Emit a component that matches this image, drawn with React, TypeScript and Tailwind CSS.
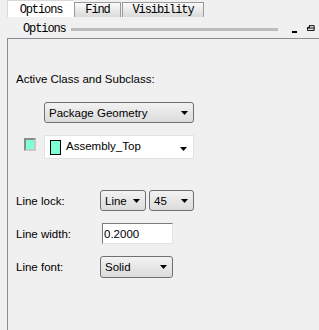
import React from "react";

function Caret() {
  return (
    <svg width="7" height="4" viewBox="0 0 7 4" className="shrink-0">
      <path d="M0 0h7L3.5 4z" fill="#000" />
    </svg>
  );
}

function Dropdown({ label, className }: { label: string; className: string }) {
  return (
    <div
      className={`flex items-center justify-between rounded-[3px] border border-[#707070] bg-gradient-to-b from-[#f2f2f2] to-[#dcdcdc] pl-[4px] pr-[5px] text-[11.5px] leading-[14px] text-black ${className}`}
    >
      <span>{label}</span>
      <Caret />
    </div>
  );
}

function Tab({ label, active, className }: { label: string; active?: boolean; className: string }) {
  return active ? (
    <div className={`flex h-[17px] items-center justify-center border-l border-t border-[#d8d8d8] bg-white pt-[1px] ${className}`}>
      {label}
    </div>
  ) : (
    <div
      className={`flex h-[15px] items-center justify-center border border-b-0 border-[#9a9a9a] bg-gradient-to-b from-[#fafafa] to-[#dadada] ${className}`}
    >
      {label}
    </div>
  );
}

export default function App() {
  return (
    <div className="h-[330px] w-[319px] overflow-hidden bg-[#f0f0f0] font-['Liberation_Sans',sans-serif] text-black">
      {/* tabs */}
      <div className="flex h-[17px] items-end pl-[7px] font-['Liberation_Mono',monospace] text-[12px] tracking-[-1.1px]">
        <Tab label="Options" active className="w-[67px]" />
        <Tab label="Find" className="w-[47px]" />
        <Tab label="Visibility" className="ml-[1px] w-[82px]" />
      </div>

      {/* title bar */}
      <div className="flex h-[21px] items-center pl-[23px] pr-[4px] pt-[2px]">
        <span className="font-['Liberation_Mono',monospace] text-[12px] tracking-[-1.1px]">Options</span>
        <div className="ml-[5px] mt-[1px] h-[3px] w-[216px] bg-[#bdbdbd]" />
        <div className="ml-[14px] mt-[7px] h-[2px] w-[6px] bg-black" />
        <svg width="8" height="8" viewBox="0 0 8 8" className="ml-[10px] mt-[1px]">
          <path d="M2.5 0.5h5v5H0.5v-3h2z M2.5 0.5v2 M0.5 3h7" stroke="#000" strokeWidth="1" fill="none" />
        </svg>
      </div>

      {/* content */}
      <div className="ml-[7px] h-[292px] border-l border-t border-[#8c8c96] pl-[8px] text-[11.5px] leading-[14px]">
        <div className="pt-[33px]">Active Class and Subclass:</div>

        <div className="ml-[28px] mt-[16px]">
          <Dropdown label="Package Geometry" className="h-[21px] w-[150px]" />
        </div>

        <div className="mt-[12px] flex items-start">
          <div className="ml-[8px] mt-[3px] h-[13px] w-[12px] border-2 border-[#8a8a8a] border-b-[#c8c8c8] border-r-[#c8c8c8] bg-[#7fffd4]" />
          <div className="ml-[8px] flex h-[24px] w-[150px] items-center border border-[#e2e2e2] bg-white pl-[5px] pr-[6px]">
            <div className="h-[15px] w-[11px] border border-black bg-[#7fffd4]" />
            <span className="ml-[5px] mb-[2px]">Assembly_Top</span>
            <span className="ml-auto mt-[3px]">
              <Caret />
            </span>
          </div>
        </div>

        <div className="mt-[31px] flex items-center">
          <span className="w-[84px]">Line lock:</span>
          <Dropdown label="Line" className="h-[21px] w-[46px]" />
          <Dropdown label="45" className="ml-[3px] h-[21px] w-[45px]" />
        </div>

        <div className="mt-[12px] flex items-center">
          <span className="w-[86px]">Line width:</span>
          <div className="flex h-[21px] w-[71px] items-center border border-[#7a7a7a] border-r-[#e3e3e3] border-b-[#e3e3e3] bg-white pl-[1px]">
            0.2000
          </div>
        </div>

        <div className="mt-[12px] flex items-center">
          <span className="w-[84px]">Line font:</span>
          <Dropdown label="Solid" className="h-[22px] w-[73px]" />
        </div>
      </div>
    </div>
  );
}
